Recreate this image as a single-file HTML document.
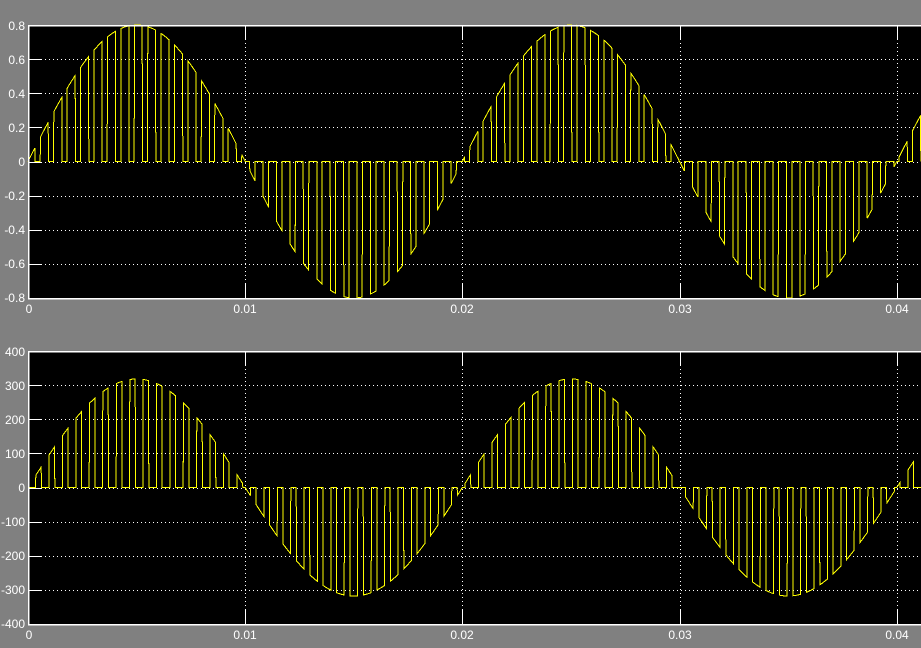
<!DOCTYPE html>
<html><head><meta charset="utf-8">
<style>
html,body{margin:0;padding:0;background:#808080;width:921px;height:648px;overflow:hidden}
svg{display:block}
text{font-family:"Liberation Sans",sans-serif;font-size:12px;fill:#fff}
</style></head>
<body>
<svg id="s" width="921" height="648" viewBox="0 0 921 648" xmlns="http://www.w3.org/2000/svg">
<rect x="0" y="0" width="921" height="648" fill="#808080"/>
<rect x="28" y="25" width="893" height="273" fill="#000"/>
<rect x="28" y="351" width="893" height="273" fill="#000"/>
<g id="grid" stroke="#fff" stroke-width="1" shape-rendering="crispEdges"></g>
<g id="traces" fill="none" stroke="#ffff00" stroke-width="1" shape-rendering="crispEdges"></g>
<g stroke="#fff" stroke-width="1.5" fill="none" shape-rendering="crispEdges">
<polyline points="921,25.5 28.5,25.5 28.5,298.5 921,298.5"/>
<polyline points="921,351.5 28.5,351.5 28.5,624.5 921,624.5"/>
</g>
<g text-anchor="end">
<text x="25" y="30">0.8</text><text x="25" y="64">0.6</text><text x="25" y="98">0.4</text><text x="25" y="132">0.2</text><text x="25" y="166">0</text><text x="25" y="200">-0.2</text><text x="25" y="234">-0.4</text><text x="25" y="268">-0.6</text><text x="25" y="302">-0.8</text>
<text x="25" y="356">400</text><text x="25" y="390">300</text><text x="25" y="424">200</text><text x="25" y="458">100</text><text x="25" y="492">0</text><text x="25" y="526">-100</text><text x="25" y="560">-200</text><text x="25" y="594">-300</text><text x="25" y="628">-400</text>
</g>
<g text-anchor="middle">
<text x="29" y="313">0</text><text x="245" y="313">0.01</text><text x="462" y="313">0.02</text><text x="680" y="313">0.03</text><text x="897" y="313">0.04</text>
<text x="29" y="639">0</text><text x="245" y="639">0.01</text><text x="462" y="639">0.02</text><text x="680" y="639">0.03</text><text x="897" y="639">0.04</text>
</g>
</svg>
<script>
(function(){
var NS="http://www.w3.org/2000/svg";
var g=document.getElementById("grid"),tr=document.getElementById("traces");
function ln(x1,y1,x2,y2,dash){var l=document.createElementNS(NS,"line");l.setAttribute("x1",x1);l.setAttribute("y1",y1);l.setAttribute("x2",x2);l.setAttribute("y2",y2);if(dash)l.setAttribute("stroke-dasharray",dash);g.appendChild(l);}
var xs=[245.5,462.5,680.5,897.5];
[[25,298],[351,624]].forEach(function(p){
 var t=p[0],b=p[1];
 for(var i=1;i<8;i++){var y=Math.round(t+i*(b-t)/8)+0.5;ln(41,y,921,y,"1 3");ln(28,y,41,y);}
 xs.forEach(function(x){ln(x,t+14,x,b-14,"1 3");ln(x,b-14,x,b);ln(x,t,x,t+14);});
});
var T=13.42,P=434.4;
function mod(a,m){return ((a%m)+m)%m;}
function build(top,amp,scale,off,on){
 var pts=[];
 for(var x=28;x<=921;x+=0.2){
  var s=Math.sin(2*Math.PI*(x-28)/P);
  var q=mod(x-28-off,T),v;
  if(s>=0)v=q<on?s:0;else v=q>=on?s:0;
  var y=top+136.5-v*amp*scale;
  pts.push(x.toFixed(1)+","+y.toFixed(1));
 }
 var pl=document.createElementNS(NS,"polyline");pl.setAttribute("points",pts.join(" "));tr.appendChild(pl);
}
build(25,0.8,136.5/0.8,12.3,8.1);
build(351,318,136.5/400,7.7,5.6);
})();
</script>
</body></html>
